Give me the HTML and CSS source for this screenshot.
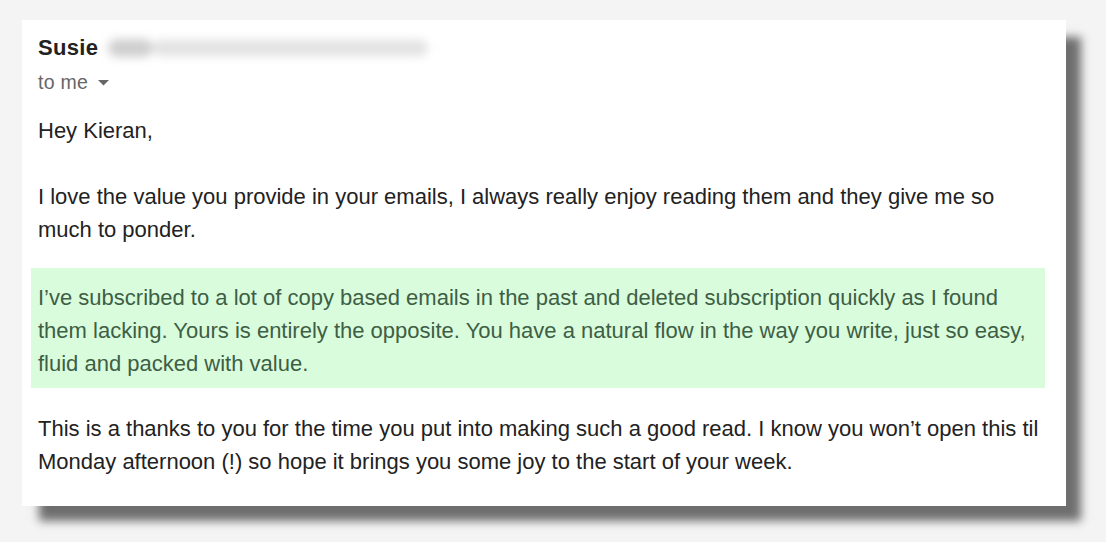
FILE: index.html
```html
<!DOCTYPE html>
<html>
<head>
<meta charset="utf-8">
<link rel="stylesheet" href="styles.css">
</head>
<body>
<div class="card">
  <div class="header">
    <div class="from"><span class="name">Susie</span><span class="email"><span class="blob1"></span><span class="blob2"></span></span></div>
    <div class="to">to me <svg class="caret" width="11" height="6" viewBox="0 0 11 6"><path d="M0 0 L11 0 L5.5 5.5 Z" fill="#666"/></svg></div>
  </div>
  <div class="body">
    <p>Hey Kieran,</p>
    <p class="lead">I love the value you provide in your emails, I always really enjoy reading them and they give me so much to ponder.</p>
    <p class="highlight">I’ve subscribed to a lot of copy based emails in the past and deleted subscription quickly as I found them lacking. Yours is entirely the opposite. You have a natural flow in the way you write, just so easy, fluid and packed with value.</p>
    <p>This is a thanks to you for the time you put into making such a good read. I know you won’t open this til Monday afternoon (!) so hope it brings you some joy to the start of your week.</p>
  </div>
</div>
</body>
</html>
```
FILE: styles.css
```css
html, body {
  margin: 0;
  padding: 0;
}
body {
  background: #f4f4f4;
  font-family: "Liberation Sans", Arial, sans-serif;
  color: #222;
  padding: 20px 40px 36px 22px;
}
.card {
  width: 1044px;
  height: 486px;
  box-sizing: border-box;
  background: #fff;
  padding: 14px 16px 0 16px;
  box-shadow: 16px 16px 9px -1px rgba(0, 0, 0, 0.55);
}
.from {
  display: flex;
  align-items: center;
  height: 28px;
}
.name {
  font-weight: bold;
  font-size: 22px;
  letter-spacing: 0.3px;
  color: #222;
}
.email {
  margin-left: 10px;
  display: flex;
  align-items: center;
  filter: blur(5px);
}
.blob1 {
  width: 45px;
  height: 18px;
  background: #cfcfcf;
  border-radius: 9px;
}
.blob2 {
  width: 275px;
  height: 16px;
  background: #e2e2e2;
  border-radius: 9px;
}
.to {
  display: flex;
  align-items: center;
  gap: 10px;
  font-size: 19.5px;
  letter-spacing: 0.3px;
  color: #666;
  height: 24px;
  margin-top: 8px;
}
.caret {
  margin-top: 2px;
}
.body {
  margin-top: 20px;
  font-size: 22px;
  line-height: 33px;
}
.body p {
  margin: 0 0 33px 0;
}
.body p.lead {
  margin-bottom: 22px;
}
.body p.highlight {
  background: #d9fcdc;
  color: #3e5e45;
  margin: 0 0 24px -7px;
  padding: 13px 10px 8px 7px;
  width: 1014px;
  box-sizing: border-box;
}
```
